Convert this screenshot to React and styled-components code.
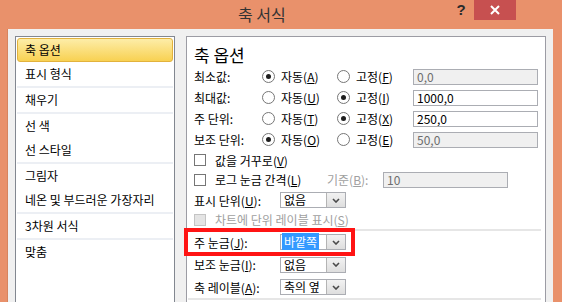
import React from 'react';
import styled, { createGlobalStyle } from 'styled-components';

const GlobalStyle = createGlobalStyle`
  html, body {
    margin: 0;
    width: 562px;
    height: 302px;
    overflow: hidden;
    background: #e9916b;
    font-family: "Noto Sans CJK KR", "Noto Sans", sans-serif;
    font-size: 12px;
    color: #000;
  }
  * { box-sizing: border-box; }
`;

const Window = styled.div`
  width: 562px;
  height: 302px;
  overflow: hidden;
  background: #e9916b;
`;

const TitleBar = styled.div`
  display: flex;
  align-items: flex-start;
  height: 29px;
`;

const Title = styled.div`
  flex: 1;
  padding-left: 238px;
  line-height: 29px;
  font-size: 16px;
  color: #333;
`;

const Help = styled.div`
  width: 12px;
  text-align: center;
  font-family: "Liberation Sans", sans-serif;
  font-weight: bold;
  font-size: 15px;
  line-height: 20px;
  color: #2b2b2b;
`;

const Close = styled.div`
  width: 42px;
  height: 20px;
  margin: 0 46px 0 7px;
  background: #c75050;
  display: flex;
  align-items: center;
  justify-content: center;
`;

const Body = styled.div`
  display: flex;
  gap: 11px;
  height: 290px;
  margin: 0 9px 0 7px;
  padding: 7px 7px 0 8px;
  background: #f0f0f0;
  border-left: 1px solid #d7845e;
`;

const CategoryList = styled.div`
  width: 160px;
  height: 300px;
  margin-left: -1px;
  padding: 1px;
  background: #fff;
  border: 1px solid #828790;
`;

const Category = styled.div`
  height: 24px;
  line-height: 22px;
  padding-left: 7px;
  border: 1px solid ${p => (p.$selected ? '#e2b23d' : 'transparent')};
  border-radius: 3px;
  background: ${p => (p.$selected ? 'linear-gradient(#fdeda8, #f8d152)' : 'transparent')};
`;

const GroupLine = styled.div`
  height: 2px;
  background: #eceff4;
`;

const Panel = styled.div`
  width: 360px;
  height: 300px;
  padding: 7px 0 0 7px;
  background: #fff;
  border: 1px solid #9c9ca4;
  display: flex;
  flex-direction: column;
`;

const Heading = styled.div`
  height: 22px;
  line-height: 22px;
  font-size: 17px;
`;

const AxisRow = styled.div`
  display: grid;
  grid-template-columns: 68px 75px 76px 125px;
  align-items: center;
  height: 21px;
`;

const Option = styled.label`
  display: flex;
  align-items: center;
  gap: 6px;
  white-space: nowrap;
`;

const Radio = styled.span`
  width: 13px;
  height: 13px;
  border-radius: 50%;
  border: 1px solid #767676;
  background: #fff;
  display: flex;
  align-items: center;
  justify-content: center;
  &::after {
    content: '';
    width: 5px;
    height: 5px;
    border-radius: 50%;
    background: ${p => (p.$on ? '#1e1e1e' : 'transparent')};
  }
`;

const TextBox = styled.div`
  height: 16px;
  padding-left: 3px;
  line-height: 14px;
  border: 1px solid #abadb3;
  background: ${p => (p.$disabled ? '#f0f0f0' : '#fff')};
  color: ${p => (p.$disabled ? '#6d6d6d' : '#000')};
`;

const CheckRow = styled.div`
  display: flex;
  align-items: center;
  gap: 9px;
  height: ${p => p.$h || 20}px;
  color: ${p => (p.$disabled ? '#a0a0a0' : '#000')};
  white-space: nowrap;
`;

const Check = styled.span`
  width: 12px;
  height: 12px;
  border: 1px solid ${p => (p.$disabled ? '#c4c4c4' : '#767676')};
  background: ${p => (p.$disabled ? '#e4e4e4' : '#fff')};
`;

const LogRow = styled.div`
  display: grid;
  grid-template-columns: 133px 56px 125px;
  align-items: center;
  height: 19px;
`;

const Muted = styled.span`
  color: #a0a0a0;
`;

const SelectRow = styled.div`
  position: relative;
  display: grid;
  grid-template-columns: 86px 66px;
  align-items: center;
  height: ${p => p.$h}px;
  white-space: nowrap;
`;

const Dropdown = styled.div`
  display: flex;
  height: 16px;
  border: 1px solid #abadb3;
  background: #fff;
`;

const Value = styled.div`
  flex: 1;
  line-height: 14px;
  padding-left: 3px;
  span {
    padding: 0 2px;
    margin-left: -2px;
    background: ${p => (p.$active ? '#3399ff' : 'transparent')};
    color: ${p => (p.$active ? '#fff' : '#000')};
  }
`;

const DropButton = styled.div`
  width: 19px;
  background: linear-gradient(#f2f2f2, #dedede);
  border-left: 1px solid #b4b4b4;
  display: flex;
  align-items: center;
  justify-content: center;
`;

const Divider = styled.div`
  height: 2px;
  margin: ${p => p.$m || '0'};
  margin-left: -6px;
  margin-right: 4px;
  background: #e6e6e6;
`;

const Highlight = styled.div`
  position: absolute;
  left: -10px;
  top: -3px;
  width: 171px;
  height: 28px;
  border: 4px solid #ff1414;
`;

const groups = [
  ['축 옵션', '표시 형식'],
  ['채우기'],
  ['선 색', '선 스타일'],
  ['그림자', '네온 및 부드러운 가장자리'],
  ['3차원 서식'],
  ['맞춤'],
];

const axisRows = [
  { label: '최소값:', auto: true, a: 'A', f: 'F', value: '0,0' },
  { label: '최대값:', auto: false, a: 'U', f: 'I', value: '1000,0' },
  { label: '주 단위:', auto: false, a: 'T', f: 'X', value: '250,0' },
  { label: '보조 단위:', auto: true, a: 'O', f: 'E', value: '50,0' },
];

// label text with its access key underlined, kept in one span
function Label({ text, k, after = '' }) {
  return <span>{text}(<u>{k}</u>){after}</span>;
}

function Chevron() {
  return (
    <svg width="8" height="5" viewBox="0 0 8 5">
      <path d="M1 1 L4 4 L7 1" fill="none" stroke="#4a4a4a" strokeWidth="1.6" />
    </svg>
  );
}

function Select({ value, active }) {
  return (
    <Dropdown>
      <Value $active={active}><span>{value}</span></Value>
      <DropButton><Chevron /></DropButton>
    </Dropdown>
  );
}

export default function App() {
  return (
    <Window>
      <GlobalStyle />
      <TitleBar>
        <Title>축 서식</Title>
        <Help>?</Help>
        <Close>
          <svg width="10" height="10" viewBox="0 0 10 10">
            <path d="M1 1 L9 9 M9 1 L1 9" stroke="#fff" strokeWidth="2" />
          </svg>
        </Close>
      </TitleBar>
      <Body>
        <CategoryList>
          {groups.map((g, i) => (
            <React.Fragment key={i}>
              {i > 0 && <GroupLine />}
              {g.map(name => (
                <Category key={name} $selected={name === '축 옵션'}>{name}</Category>
              ))}
            </React.Fragment>
          ))}
        </CategoryList>
        <Panel>
          <Heading>축 옵션</Heading>
          {axisRows.map(r => (
            <AxisRow key={r.label}>
              <span>{r.label}</span>
              <Option><Radio $on={r.auto} /><Label text="자동" k={r.a} /></Option>
              <Option><Radio $on={!r.auto} /><Label text="고정" k={r.f} /></Option>
              <TextBox $disabled={r.auto}>{r.value}</TextBox>
            </AxisRow>
          ))}
          <CheckRow><Check /><Label text="값을 거꾸로" k="V" /></CheckRow>
          <LogRow>
            <CheckRow $h={19}><Check /><Label text="로그 눈금 간격" k="L" /></CheckRow>
            <Muted><Label text="기준" k="B" after=":" /></Muted>
            <TextBox $disabled>10</TextBox>
          </LogRow>
          <SelectRow $h={22}>
            <Label text="표시 단위" k="U" after=":" />
            <Select value="없음" />
          </SelectRow>
          <CheckRow $h={17} $disabled><Check $disabled /><Label text="차트에 단위 레이블 표시" k="S" /></CheckRow>
          <Divider $m="1px 0 0" />
          <SelectRow $h={22}>
            <Label text="주 눈금" k="J" after=":" />
            <Select value="바깥쪽" active />
            <Highlight />
          </SelectRow>
          <SelectRow $h={23}>
            <Label text="보조 눈금" k="I" after=":" />
            <Select value="없음" />
          </SelectRow>
          <SelectRow $h={22}>
            <Label text="축 레이블" k="A" after=":" />
            <Select value="축의 옆" />
          </SelectRow>
          <Divider />
        </Panel>
      </Body>
    </Window>
  );
}
